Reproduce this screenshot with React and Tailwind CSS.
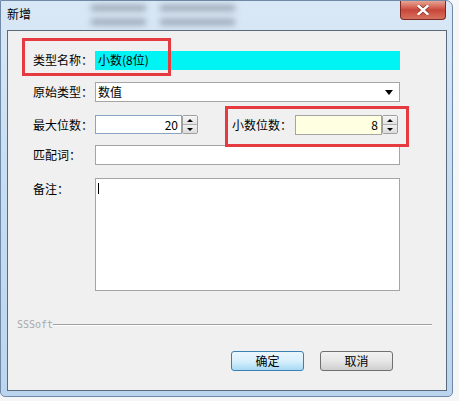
import React from "react";

const font = { fontFamily: '"Noto Sans CJK SC", "Noto Sans", sans-serif' };

function Spinner() {
  return (
    <div className="flex flex-col w-[16px] h-full border border-[#a0a0a0] rounded-[2px] overflow-hidden">
      <div className="flex-1 flex items-center justify-center bg-gradient-to-b from-[#f6f6f6] to-[#e2e2e2] border-b border-[#b0b0b0]">
        <div className="w-0 h-0 border-l-[3px] border-r-[3px] border-b-[3px] border-l-transparent border-r-transparent border-b-black" />
      </div>
      <div className="flex-1 flex items-center justify-center bg-gradient-to-b from-[#f0f0f0] to-[#dcdcdc]">
        <div className="w-0 h-0 border-l-[3px] border-r-[3px] border-t-[3px] border-l-transparent border-r-transparent border-t-black" />
      </div>
    </div>
  );
}

function Label({ children }) {
  return <div className="w-[62px] shrink-0 text-[12px] leading-none text-black">{children}</div>;
}

export default function App() {
  return (
    <div className="w-[459px] h-[401px] bg-[#f4f6f8] overflow-hidden" style={font}>
      <div className="relative w-[453px] h-[397px] bg-gradient-to-b from-[#d9e8f6] via-[#c6dcf1] to-[#bcd5ee] border border-[#6f8aa6] rounded-tr-[7px] rounded-br-[5px] rounded-bl-[5px] flex flex-col">
        {/* title bar */}
        <div className="h-[29px] shrink-0 flex items-start">
          <div className="pl-[6px] pt-[7px] text-[12px] leading-none text-black">新增</div>
          <div className="ml-[60px] mt-[4px] flex gap-[14px] opacity-50 blur-[3px]">
            <div className="flex flex-col gap-[8px]">
              <div className="w-[55px] h-[6px] bg-[#5a6470]" />
              <div className="w-[55px] h-[6px] bg-[#5a6470]" />
            </div>
            <div className="flex flex-col gap-[8px]">
              <div className="w-[75px] h-[6px] bg-[#5a6470]" />
              <div className="w-[75px] h-[6px] bg-[#5a6470]" />
            </div>
          </div>
          <div className="ml-auto mr-[6px] w-[46px] h-[19px] rounded-b-[4px] border border-[#7a2a22] border-t-0 bg-gradient-to-b from-[#e8a393] via-[#c9463a] to-[#d5705e] flex items-center justify-center">
            <svg width="12" height="10" viewBox="0 0 12 10">
              <path d="M1.5 1 L10.5 9 M10.5 1 L1.5 9" stroke="#5a1a10" strokeWidth="4" strokeLinecap="square" opacity="0.6" />
              <path d="M1.5 1 L10.5 9 M10.5 1 L1.5 9" stroke="#ffffff" strokeWidth="2.4" strokeLinecap="square" />
            </svg>
          </div>
        </div>

        {/* client area */}
        <div className="relative ml-[6px] mr-[5px] w-[440px] h-[361px] bg-[#f0f0f0] border border-[#5b6b7c] flex flex-col pl-[25px] pt-[19px]">
          <div className="flex items-center h-[20px]">
            <Label>类型名称：</Label>
            <div className="w-[305px] h-[19px] bg-[#00f4f4] flex items-center pl-[3px] text-[12px] leading-none">小数(8位)</div>
          </div>

          <div className="flex items-center h-[20px] mt-[12px]">
            <Label>原始类型：</Label>
            <div className="w-[305px] h-[20px] bg-white border border-[#a5a5a5] flex items-center pl-[2px] pr-[6px] text-[12px] leading-none">
              <span>数值</span>
              <div className="ml-auto w-0 h-0 border-l-[4px] border-r-[4px] border-t-[5px] border-l-transparent border-r-transparent border-t-black" />
            </div>
          </div>

          <div className="flex items-center h-[19px] mt-[13px]">
            <Label>最大位数：</Label>
            <div className="w-[87px] h-[19px] bg-white border border-[#8aa4c2] flex items-center justify-end pr-[3px] text-[12px] leading-none">20</div>
            <Spinner />
            <div className="ml-[34px] w-[63px] text-[12px] leading-none">小数位数：</div>
            <div className="w-[87px] h-[20px] bg-[#ffffe1] border border-[#a5a5a5] flex items-center justify-end pr-[3px] text-[12px] leading-none">8</div>
            <Spinner />
          </div>

          <div className="flex items-center h-[20px] mt-[11px]">
            <Label>匹配词：</Label>
            <div className="w-[305px] h-[20px] bg-white border border-[#a5a5a5]" />
          </div>

          <div className="flex items-start mt-[13px]">
            <div className="pt-[5px]"><Label>备注：</Label></div>
            <div className="w-[305px] h-[113px] bg-white border border-[#a5a5a5] pl-[2px] pt-[4px]">
              <div className="w-px h-[11px] bg-black" />
            </div>
          </div>

          <div className="flex items-center -ml-[16px] mr-[14px] mt-[29px]">
            <span className="text-[10px] leading-none text-[#a8a8a8]" style={{ fontFamily: '"DejaVu Sans Mono", monospace' }}>SSSoft</span>
            <div className="flex-1 border-t border-[#a0a0a0] border-b border-b-white h-0" />
          </div>

          <div className="flex justify-end gap-[16px] mr-[53px] mt-[21px]">
            <button className="w-[73px] h-[20px] rounded-[3px] border border-[#3c7fb1] bg-gradient-to-b from-[#eaf6fd] via-[#d9f0fc] to-[#a7d9f5] text-[12px] leading-none text-black" style={font}>确定</button>
            <button className="w-[73px] h-[20px] rounded-[3px] border border-[#707070] bg-gradient-to-b from-[#f2f2f2] via-[#e6e6e6] to-[#cfcfcf] text-[12px] leading-none text-black" style={font}>取消</button>
          </div>

          {/* annotation boxes */}
          <div className="absolute left-[14px] top-[7px] w-[149px] h-[38px] border-[3px] border-[#e53a40]" />
          <div className="absolute left-[217px] top-[75px] w-[184px] h-[41px] border-[3px] border-[#e53a40]" />
        </div>
      </div>
    </div>
  );
}
